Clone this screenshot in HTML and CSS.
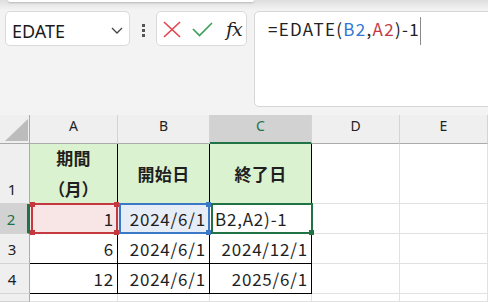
FILE: index.html
```html
<!DOCTYPE html>
<html>
<head>
  <title>EDATE</title>
  <link rel="stylesheet" href="styles.css">
</head>
<body>
  <div class="topbar">
    <div class="ribbon"></div>
    <div class="bar">
      <div class="namebox">
        <span>EDATE</span>
        <svg width="12" height="7" viewBox="0 0 12 7"><path d="M1 1 L6 6 L11 1" fill="none" stroke="#444" stroke-width="1.3"/></svg>
      </div>
      <div class="grip"><i></i><i></i><i></i></div>
      <div class="fxbox">
        <svg class="cancel" width="18" height="17" viewBox="0 0 18 17"><path d="M1 1 L17 16 M17 1 L1 16" stroke="#e2474f" stroke-width="1.7" fill="none"/></svg>
        <svg class="enter" width="21" height="15" viewBox="0 0 21 15"><path d="M1 7 L7.5 13.5 L20 1" stroke="#3fa159" stroke-width="1.7" fill="none"/></svg>
        <span class="fx">fx</span>
      </div>
      <div class="formula">
        <span>=EDATE(</span><span class="ref-b">B2</span><span>,</span><span class="ref-a">A2</span><span>)-1</span><span class="caret"></span>
      </div>
    </div>
  </div>

  <div class="sheet">
    <!-- column headers -->
    <div class="corner">
      <svg width="23" height="22" viewBox="0 0 23 22"><polygon points="23,0 23,22 0,22" fill="#bcbcbc"/></svg>
    </div>
    <div class="ch">A</div>
    <div class="ch">B</div>
    <div class="ch active">C</div>
    <div class="ch">D</div>
    <div class="ch">E</div>

    <!-- row 1 -->
    <div class="rh rh-bottom">1</div>
    <div class="c t head"><div>期間<br><span class="palt">（月）</span></div></div>
    <div class="c t head">開始日</div>
    <div class="c t head">終了日</div>
    <div class="c"></div>
    <div class="c"></div>

    <!-- row 2 -->
    <div class="rh active">2</div>
    <div class="c t num ref-a-fill">1<div class="sel sel-a"><i class="h tl"></i><i class="h tr"></i><i class="h bl"></i><i class="h br"></i></div></div>
    <div class="c t num ref-b-fill">2024/6/1<div class="sel sel-b"><i class="h tr"></i><i class="h br"></i></div></div>
    <div class="c t edit">B2,A2)-1<div class="sel sel-c"><i class="h br"></i></div></div>
    <div class="c"></div>
    <div class="c"></div>

    <!-- row 3 -->
    <div class="rh">3</div>
    <div class="c t num">6</div>
    <div class="c t num">2024/6/1</div>
    <div class="c t num">2024/12/1</div>
    <div class="c"></div>
    <div class="c"></div>

    <!-- row 4 -->
    <div class="rh">4</div>
    <div class="c t num">12</div>
    <div class="c t num">2024/6/1</div>
    <div class="c t num">2025/6/1</div>
    <div class="c"></div>
    <div class="c"></div>

    <!-- row 5, only its top edge is in view -->
    <div class="rh"></div>
    <div class="c"></div>
    <div class="c"></div>
    <div class="c"></div>
    <div class="c"></div>
    <div class="c"></div>
  </div>
</body>
</html>
```

FILE: styles.css
```css
* {
  box-sizing: border-box;
}

body {
  margin: 0;
  background-color: #f3f3f3;
  font-family: "Noto Sans CJK JP", sans-serif;
  color: #1f1f1f;
  overflow: hidden;
  width: 488px;
  height: 302px;
}

/* formula bar area */
.topbar {
  height: 115px;
  background: linear-gradient(#dedede, #f3f3f3 10px);
  overflow: hidden;
}

.ribbon {
  height: 2px;
  width: 246px;
  margin-left: 8px;
  background-color: #fff;
  border-radius: 0 0 4px 4px;
  box-shadow: 0 1px 2px rgba(0, 0, 0, 0.2);
}

.bar {
  display: flex;
  align-items: flex-start;
  margin-top: 9px;
}

.namebox {
  width: 125px;
  height: 35px;
  margin-left: 5px;
  background-color: #fff;
  border: 1px solid #dadada;
  border-radius: 5px;
  display: flex;
  align-items: center;
  justify-content: space-between;
  padding: 4px 6px 0 6px;
  font-family: "Noto Sans", sans-serif;
  font-size: 18px;
  color: #1b1b1b;
}

.grip {
  width: 26px;
  height: 35px;
  display: flex;
  flex-direction: column;
  align-items: center;
  justify-content: center;
  gap: 2px;
  padding-top: 3px;
}

.grip i {
  width: 3px;
  height: 3px;
  background-color: #555;
}

.fxbox {
  width: 91px;
  height: 35px;
  background-color: #fff;
  border: 1px solid #dadada;
  border-radius: 5px;
  display: flex;
  align-items: center;
  padding: 1px 0 0 6px;
}

.cancel {
  margin-top: 1px;
}

.enter {
  margin-left: 11px;
}

.fx {
  margin-left: 13px;
  font-family: "DejaVu Serif", serif;
  font-style: italic;
  font-size: 19px;
  color: #222;
  letter-spacing: -1px;
}

.formula {
  flex: 1;
  height: 96px;
  margin-left: 7px;
  margin-right: -10px;
  background-color: #fff;
  border: 1px solid #d6d6d6;
  border-radius: 5px;
  padding-left: 13px;
  font-size: 17px;
  line-height: 34px;
  letter-spacing: 1.3px;
  color: #222;
  white-space: nowrap;
}

.ref-b {
  color: #2f78d2;
}

.ref-a {
  color: #c23a45;
}

.caret {
  display: inline-block;
  width: 1px;
  height: 28px;
  background-color: #8a8a8a;
  vertical-align: middle;
}

/* grid */
.sheet {
  display: grid;
  grid-template-columns: 30px 88px 92px 102px 88px 88px;
  grid-template-rows: 29px 60px 30px 30px 30px 8px;
  background-color: #fff;
}

.corner {
  background-color: #efefef;
  border-right: 1px solid #ababab;
  border-bottom: 1px solid #ababab;
  display: flex;
  align-items: flex-end;
  padding: 0 0 2px 5px;
}

.corner svg {
  display: block;
}

.ch {
  background-color: #efefef;
  border-right: 1px solid #d4d4d4;
  border-bottom: 1px solid #ababab;
  display: flex;
  align-items: center;
  justify-content: center;
  padding-bottom: 7px;
  font-family: "Noto Sans", sans-serif;
  font-size: 14px;
  color: #222;
}

.ch.active {
  background-color: #d2d2d2;
  border-bottom: 2px solid #217346;
  color: #217346;
  padding-bottom: 6px;
}

.rh {
  background-color: #efefef;
  border-right: 1px solid #ababab;
  border-bottom: 1px solid #d4d4d4;
  display: flex;
  align-items: center;
  justify-content: center;
  padding-right: 5px;
  font-family: "Noto Sans", sans-serif;
  font-size: 15px;
  color: #222;
}

.rh-bottom {
  align-items: flex-end;
  padding-bottom: 4px;
}

.rh.active {
  background-color: #d2d2d2;
  border-right: 3px solid #217346;
  color: #217346;
}

.c {
  position: relative;
  border-right: 1px solid #e1e1e1;
  border-bottom: 1px solid #e1e1e1;
  font-size: 17px;
  letter-spacing: 0.8px;
  display: flex;
  align-items: center;
  white-space: nowrap;
}

.c.t {
  border-color: #000;
}

.head {
  background-color: #daf2d0;
  font-weight: bold;
  justify-content: center;
  text-align: center;
  line-height: 31px;
  letter-spacing: 0.3px;
  padding-bottom: 1px;
}

.palt {
  font-feature-settings: "palt";
}

.num {
  justify-content: flex-end;
  padding-right: 3px;
}

.edit {
  padding-left: 5px;
}

.ref-a-fill {
  background-color: #f8e6e6;
}

.ref-b-fill {
  background-color: #e7edf7;
}

/* selection outlines */
.sel {
  position: absolute;
  border: 2px solid;
  pointer-events: none;
}

.sel-a {
  left: 1px;
  top: -1px;
  right: -1px;
  bottom: -1px;
  border-color: #c5383f;
  z-index: 3;
}

.sel-b {
  left: 1px;
  top: -1px;
  right: -1px;
  bottom: -1px;
  border-color: #3b78c6;
  z-index: 2;
}

.sel-c {
  left: 1px;
  top: -1px;
  right: -2px;
  bottom: -1px;
  border-color: #217346;
  z-index: 1;
}

.h {
  position: absolute;
  width: 5px;
  height: 5px;
}

.sel-a .h {
  background-color: #c5383f;
}

.sel-b .h {
  background-color: #3b78c6;
}

.sel-c .h {
  background-color: #217346;
}

.tl {
  top: -3px;
  left: -3px;
}

.tr {
  top: -3px;
  right: -3px;
}

.bl {
  bottom: -3px;
  left: -3px;
}

.br {
  bottom: -3px;
  right: -3px;
}
```
